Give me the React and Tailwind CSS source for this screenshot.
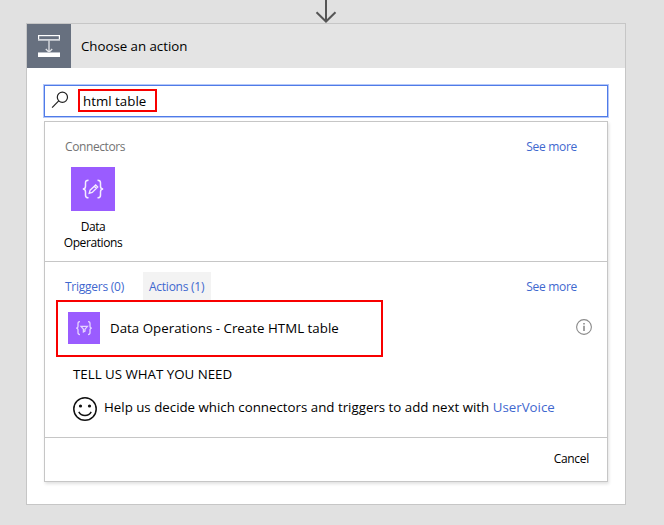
import React from "react";

function InsertStepIcon() {
  return (
    <svg width="44" height="44" viewBox="0 0 44 44" className="block bg-[#67707f]" fill="none">
      <rect x="11.6" y="11.6" width="20.8" height="4" stroke="#fff" strokeWidth="1.2" />
      <path d="M11 16.2h22" stroke="#b9bec6" strokeWidth="1.6" />
      <path d="M22 16.5V28M18.8 25l3.2 3.2 3.2-3.2" stroke="#e3e5e9" strokeWidth="1.3" />
      <rect x="11" y="29" width="22" height="4" fill="#fff" />
      <path d="M11 28.5h22" stroke="#b9bec6" />
    </svg>
  );
}

function DataOperationsIcon() {
  return (
    <svg width="44" height="44" viewBox="0 0 44 44" className="block bg-[#9a5cff]" fill="none" stroke="#f4ecff" strokeWidth="1.5">
      <path d="M17.5 13.2c-2.2 0-3 .8-3 2.6v3.4c0 1.8-.8 2.8-2.7 2.8 1.9 0 2.7 1 2.7 2.8v3.4c0 1.8.8 2.600 3 2.600" />
      <path d="M26.5 13.2c2.2 0 3 .8 3 2.6v3.4c0 1.8.8 2.8 2.7 2.8-1.900 0-2.700 1-2.700 2.800v3.400c0 1.800-.8 2.600-3 2.600" />
      <path d="M18.2 26.200l.9-3 5.600-5.200 2 2-5.500 5.400zM23.300 19.200l2.100 2.100" strokeWidth="1.300" />
    </svg>
  );
}

function FilterTableIcon() {
  return (
    <svg width="32" height="32" viewBox="0 0 32 32" className="block shrink-0 bg-[#9a5cff]" fill="none" stroke="#e6d6ff" strokeWidth="1.300">
      <path d="M12 9.600c-1.600 0-2 .6-2 1.800v2.800c0 1.200-.6 1.900-1.900 1.900 1.300 0 1.900.7 1.900 1.900v2.800c0 1.200.4 1.800 2 1.800" />
      <path d="M20 9.600c1.600 0 2 .6 2 1.800v2.800c0 1.200.6 1.900 1.900 1.900-1.300 0-1.900.7-1.900 1.900v2.800c0 1.200-.4 1.800-2 1.800" />
      <path d="M13 14.300h6.400l-2.400 2.900v1.900l-1.600.8v-2.700z" />
    </svg>
  );
}

function SearchIcon() {
  return (
    <svg width="18" height="18" viewBox="0 0 18 18" className="block" fill="none" stroke="#222" strokeWidth="1.2">
      <circle cx="11.4" cy="6.2" r="5.1" />
      <path d="M7.7 9.9L1.1 16.6" />
    </svg>
  );
}

function SmileIcon() {
  return (
    <svg width="24" height="24" viewBox="0 0 24 24" className="block shrink-0" fill="none" stroke="#111" strokeWidth="1.5">
      <circle cx="12" cy="12" r="11.2" />
      <path d="M5.8 14.8c1.3 2.4 3.6 3.6 6.2 3.6s4.9-1.2 6.2-3.6" />
      <circle cx="7.5" cy="9" r="1.6" fill="#111" stroke="none" />
      <circle cx="16.5" cy="9" r="1.6" fill="#111" stroke="none" />
    </svg>
  );
}

function InfoIcon() {
  return (
    <svg width="16" height="16" viewBox="0 0 16 16" className="block" fill="none" stroke="#8a8a8a">
      <circle cx="8" cy="8" r="7.4" strokeWidth="1.1" />
      <path d="M8 6.7V12M8 4v1.5" strokeWidth="1.6" />
    </svg>
  );
}

export default function App() {
  return (
    <div className="relative h-[525px] w-[664px] overflow-hidden bg-[#e1e1e1] pl-[26px] pt-[23px] font-['Open_Sans','Noto_Sans',sans-serif] text-black">
      <svg width="22" height="24" viewBox="0 0 22 24" className="absolute left-[315px] top-0" fill="none" stroke="#555" strokeWidth="2">
        <path d="M11 0V22M1.5 12.3L11 21.5L20.5 12.3" />
      </svg>
      <section className="h-[482px] w-[600px] border border-[#c6c6c6] bg-white">
        <header className="flex h-[44px] bg-[#e4e4e4]">
          <InsertStepIcon />
          <h1 className="ml-[10px] mt-[12px] text-[13.3px] leading-5 tracking-[-0.03px] whitespace-nowrap">Choose an action</h1>
        </header>

        <div className="ml-[17px] mt-[17px] flex h-[32px] w-[564px] border border-[#4f7be8] shadow-[0_0_0_1px_#b5c8f8]">
          <div className="ml-[6px] mt-[5px]"><SearchIcon /></div>
          <div className="ml-[9px] mt-[3px] h-[23px] w-[79px] border-2 border-[#f80000] pl-[3px] text-[13.3px] leading-[20px] tracking-[0.02px] whitespace-nowrap">html table</div>
        </div>

        <div className="ml-[17px] mt-[4px] h-[361px] w-[564px] border border-[#c6c6c6] shadow-[1px_2px_3px_rgba(0,0,0,0.12)]">
          <div className="h-[140px] border-b border-[#c6c6c6] pt-[17px]">
            <div className="flex justify-between pl-[20px] pr-[30px] text-[12px] leading-4 whitespace-nowrap">
              <span className="tracking-[-0.4px] text-[#737373]">Connectors</span>
              <span className="tracking-[-0.3px] text-[#3f68cf]">See more</span>
            </div>
            <div className="ml-[12px] mt-[12px] flex w-[72px] flex-col items-center">
              <DataOperationsIcon />
              <p className="mt-[8px] text-center text-[12px] leading-4 tracking-[-0.4px]">Data<br />Operations</p>
            </div>
          </div>

          <div className="h-[176px] border-b border-[#c6c6c6] pt-[10px]">
            <div className="flex h-[28px] text-[12px] leading-4 text-[#3f68cf] whitespace-nowrap">
              <span className="ml-[20px] w-[78px] pt-[7px] tracking-[-0.25px]">Triggers (0)</span>
              <span className="w-[68px] bg-[#f3f3f3] pl-[6px] pt-[7px] tracking-[-0.25px]">Actions (1)</span>
              <span className="ml-auto mr-[30px] pt-[7px] tracking-[-0.3px]">See more</span>
            </div>
            <div className="flex h-[57px] items-start">
              <div className="ml-[11px] flex h-[57px] w-[327px] border-2 border-[#f80000] pl-[10px] pt-[10px]">
                <FilterTableIcon />
                <span className="ml-[10px] mt-[6px] text-[13.3px] leading-5 tracking-[0.02px] whitespace-nowrap">Data Operations - Create HTML table</span>
              </div>
              <div className="ml-auto mr-[15px] mt-[19px]"><InfoIcon /></div>
            </div>
            <p className="ml-[28px] mt-[7px] text-[13.3px] leading-5 whitespace-nowrap">TELL US WHAT YOU NEED</p>
            <div className="ml-[28px] mt-[13px] flex">
              <SmileIcon />
              <p className="ml-[7px] text-[13.3px] leading-5 whitespace-nowrap">
                Help us decide which connectors and triggers to add next with <span className="text-[#3f68cf]">UserVoice</span>
              </p>
            </div>
          </div>

          <div className="flex justify-end pr-[18px] pt-[13px] text-[12px] leading-4">
            <span className="tracking-[-0.3px]">Cancel</span>
          </div>
        </div>
      </section>
    </div>
  );
}
